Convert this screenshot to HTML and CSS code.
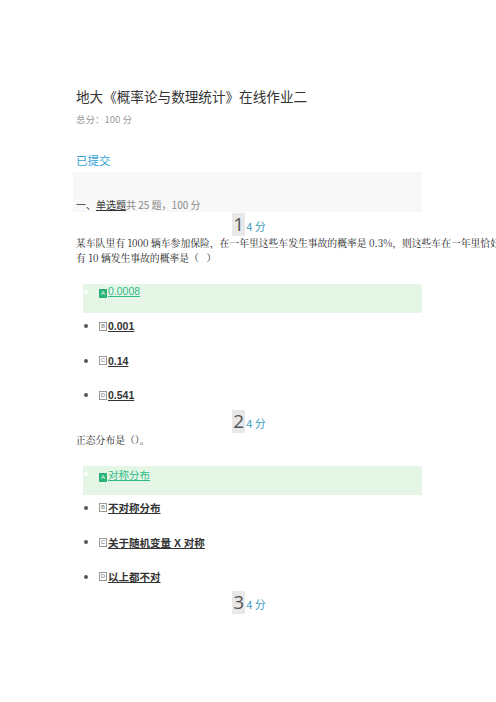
FILE: index.html
```html
<!DOCTYPE html>
<html lang="zh-CN">
<head>
    <meta charset="UTF-8">
    <meta name="viewport" content="width=device-width, initial-scale=1.0">
    <title>在线作业二</title>
    <link rel="stylesheet" href="styles.css">
</head>
<body>
    <div class="container">
        <h1 class="title">地大《概率论与数理统计》在线作业二</h1>
        <div class="total">总分：100 分</div>
        <div class="status">已提交</div>

        <div class="section-bar">
            <span class="section-name">一、<u>单选题</u></span><span class="section-info">共 25 题，100 分</span>
        </div>

        <!-- 第 1 题 -->
        <div class="question">
            <div class="score first"><span class="num">1</span><span class="pts">4 分</span></div>
            <p class="question-text">某车队里有 1000 辆车参加保险，在一年里这些车发生事故的概率是 0.3%，则这些车在一年里恰好有 10 辆发生事故的概率是（&nbsp;&nbsp;&nbsp;）</p>
            <ul class="options">
                <li class="selected"><span class="label"><span class="letter">A</span>0.0008</span></li>
                <li><span class="letter">B</span><span class="label">0.001</span></li>
                <li><span class="letter">C</span><span class="label">0.14</span></li>
                <li><span class="letter">D</span><span class="label">0.541</span></li>
            </ul>
        </div>

        <!-- 第 2 题 -->
        <div class="question">
            <div class="score"><span class="num">2</span><span class="pts">4 分</span></div>
            <p class="question-text">正态分布是（）。</p>
            <ul class="options">
                <li class="selected"><span class="label"><span class="letter">A</span>对称分布</span></li>
                <li><span class="letter">B</span><span class="label">不对称分布</span></li>
                <li><span class="letter">C</span><span class="label">关于随机变量 X 对称</span></li>
                <li><span class="letter">D</span><span class="label">以上都不对</span></li>
            </ul>
        </div>

        <!-- 第 3 题 -->
        <div class="question">
            <div class="score"><span class="num">3</span><span class="pts">4 分</span></div>
        </div>
    </div>
</body>
</html>
```

FILE: styles.css
```css
body {
    margin: 0;
    background-color: #fff;
    overflow: hidden;
    font-family: "Noto Sans CJK SC", "Noto Sans", sans-serif;
    color: #333;
}
.container {
    width: 346px;
    padding-left: 76px;
    padding-top: 86px;
}
.title {
    margin: 0;
    font-size: 13.6px;
    font-weight: normal;
    line-height: 20px;
    color: #333;
}
.total {
    margin-top: 6px;
    font-size: 9.5px;
    line-height: 14px;
    color: #999;
}
.status {
    margin-top: 26px;
    font-size: 11.5px;
    line-height: 16px;
    color: #35a2d6;
}
.section-bar {
    margin-top: 4px;
    margin-left: -3px;
    padding: 26px 0 0 3px;
    height: 14px;
    line-height: 14px;
    background-color: #f8f8f8;
    font-size: 10px;
}
.section-name {
    color: #333;
}
.section-info {
    color: #888;
}
.score {
    margin-top: 7px;
    height: 23px;
    line-height: 23px;
    text-align: center;
}
.score.first {
    margin-top: 1px;
}
.score .num {
    display: inline-block;
    padding: 0 1px;
    background-color: #e8e8e8;
    font-family: "Open Sans", sans-serif;
    font-size: 19px;
    color: #555;
}
.score .pts {
    font-size: 11px;
    color: #3d9dc0;
    margin-left: 1px;
}
.question-text {
    margin: 0;
    width: 426px;
    font-family: "Noto Serif CJK SC", "Liberation Serif", "Noto Sans CJK SC", serif;
    font-size: 9.8px;
    line-height: 15px;
    color: #222;
}
.options {
    list-style: none;
    margin: 18px 0 0 7px;
    padding: 0;
}
.options li {
    display: flex;
    align-items: center;
    height: 14.5px;
    margin-top: 20px;
    padding-left: 1px;
    font-size: 10.5px;
    font-weight: bold;
    color: #333;
}
.options li::before {
    content: "";
    width: 4px;
    height: 4px;
    border-radius: 50%;
    background-color: #555;
    margin-right: 11px;
}
.options li.selected {
    margin-top: 0;
    height: 15px;
    padding-top: 1px;
    padding-bottom: 13px;
    align-items: flex-start;
    background-color: #e6f6e6;
    color: #2dbb8a;
    font-weight: normal;
}
.options li.selected + li {
    margin-top: 6px;
}
.options li.selected::before {
    background-color: #fff;
    margin-top: 5px;
}
.label {
    text-decoration: underline;
    font-family: "Liberation Sans", "Noto Sans CJK SC", sans-serif;
}
.letter {
    display: inline-block;
    width: 6px;
    height: 7px;
    border: 1px solid #999;
    font-size: 6px;
    line-height: 7px;
    text-align: center;
    font-weight: normal;
    color: #777;
    margin-right: 1px;
    font-family: "Liberation Sans", sans-serif;
}
.selected .letter {
    border-color: #2ab27b;
    background-color: #2ab27b;
    color: #fff;
}
```
